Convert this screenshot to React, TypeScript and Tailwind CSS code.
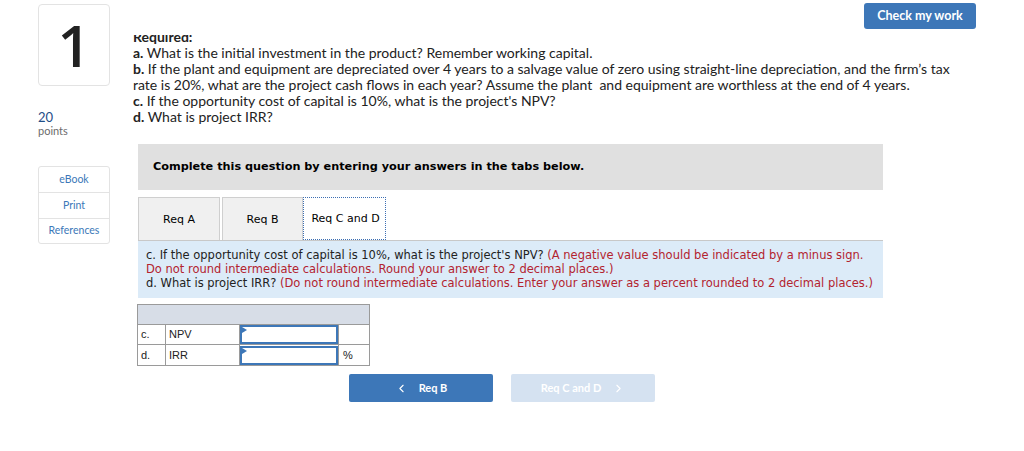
import { ChevronLeft, ChevronRight } from 'lucide-react'

export default function App() {
  const sans = { fontFamily: 'Lato, "Liberation Sans", sans-serif' }
  const verdana = { fontFamily: '"DejaVu Sans", Verdana, sans-serif' }
  return (
    <div className="w-[1024px] h-[451px] bg-white flex pl-[38px] text-[#222]" style={sans}>
      {/* left column */}
      <div className="w-[72px] pt-[4px] flex flex-col">
        <div
          className="h-[82px] border border-[#e3e3e3] rounded-[4px] flex items-center justify-center text-[58px] leading-none font-semibold text-[#222]"
          style={{ fontFamily: '"Open Sans", sans-serif' }}
        >
          1
        </div>
        <div className="mt-[24px] text-[13px] leading-[14px] text-[#1f4e87]">20</div>
        <div className="text-[11px] leading-[14px] text-[#6b6b6b]">points</div>
        <div className="mt-[28px] border border-[#e3e3e3] rounded-[3px] flex flex-col text-[10.5px] text-[#3b78b8]">
          <div className="h-[26px] flex items-center justify-center border-b border-[#e3e3e3]">eBook</div>
          <div className="h-[26px] flex items-center justify-center border-b border-[#e3e3e3]">Print</div>
          <div className="h-[24px] flex items-center justify-center">References</div>
        </div>
      </div>

      {/* main column */}
      <div className="ml-[23px] w-[843px] flex flex-col">
        <div className="flex justify-end pt-[3px]">
          <button className="h-[26px] w-[112px] rounded-[3px] bg-[#3d77b8] text-white text-[12.5px] font-bold">
            Check my work
          </button>
        </div>
        <div className="mt-[6px] h-[96px] overflow-hidden">
          <div className="-mt-[6px] text-[14px] leading-[16px]">
            <p className="font-bold">Required:</p>
            <p><b>a.</b> What is the initial investment in the product? Remember working capital.</p>
            <p className="w-[830px]">
              <b>b.</b> If the plant and equipment are depreciated over 4 years to a salvage value of zero using straight-line depreciation, and the firm’s tax rate is 20%, what are the project cash flows in each year? Assume the plant&nbsp; and equipment are worthless at the end of 4 years.
            </p>
            <p><b>c.</b> If the opportunity cost of capital is 10%, what is the project's NPV?</p>
            <p><b>d.</b> What is project IRR?</p>
          </div>
        </div>

        <div className="ml-[5px] w-[745px] mt-[13px]" style={verdana}>
          <div className="h-[46px] bg-[#e0e0e0] flex items-center pl-[15px] text-[11.25px] font-bold text-black">
            Complete this question by entering your answers in the tabs below.
          </div>
          <div className="mt-[7px] flex text-[11px] text-black">
            <div className="w-[82px] h-[43px] bg-[#f0f0f0] border border-[#cfcfcf] border-b-0 flex items-center justify-center pt-[2px]">Req A</div>
            <div className="ml-[2px] w-[81px] h-[43px] bg-[#f0f0f0] border border-[#cfcfcf] border-b-0 flex items-center justify-center pt-[2px]">Req B</div>
            <div className="w-[83px] h-[43px] bg-white border border-dotted border-[#3d6fb3] flex items-center justify-center pt-[2px] pl-[2px]">Req C and D</div>
          </div>
          <div className="border-t border-[#c8c8c8] bg-[#dcebf8] h-[58px] pl-[8px] pt-[7px] text-[11.5px] leading-[14px]">
            <p>
              c. If the opportunity cost of capital is 10%, what is the project's NPV?{' '}
              <span className="text-[#b3232f]">(A negative value should be indicated by a minus sign. Do not round intermediate calculations. Round your answer to 2 decimal places.)</span>
            </p>
            <p>
              d. What is project IRR?{' '}
              <span className="text-[#b3232f]">(Do not round intermediate calculations. Enter your answer as a percent rounded to 2 decimal places.)</span>
            </p>
          </div>

          <table
            className="mt-[6px] -ml-[1px] border-collapse text-[11px] text-[#222]"
            style={{ fontFamily: '"Liberation Sans", Arial, sans-serif' }}
          >
            <tbody>
              <tr className="h-[20px] bg-[#d7dde7]">
                <td colSpan={4} className="border border-[#9a9a9a]"></td>
              </tr>
              <tr className="h-[20px]">
                <td className="w-[28px] border border-[#9a9a9a] pl-[3px]">c.</td>
                <td className="w-[74px] border border-[#9a9a9a] pl-[3px]">NPV</td>
                <td className="w-[99px] border border-[#9a9a9a] p-0">
                  <div className="relative h-[19px] border-2 border-[#3d77b8]">
                    <span className="absolute left-0 top-0 w-0 h-0 border-t-[3px] border-b-[3px] border-l-[5px] border-t-transparent border-b-transparent border-l-[#3d77b8]"></span>
                  </div>
                </td>
                <td className="w-[31px] border border-[#9a9a9a] pl-[4px]"></td>
              </tr>
              <tr className="h-[21px]">
                <td className="border border-[#9a9a9a] pl-[3px]">d.</td>
                <td className="border border-[#9a9a9a] pl-[3px]">IRR</td>
                <td className="border border-[#9a9a9a] p-0">
                  <div className="relative h-[19px] border-2 border-[#3d77b8]">
                    <span className="absolute left-0 top-0 w-0 h-0 border-t-[3px] border-b-[3px] border-l-[5px] border-t-transparent border-b-transparent border-l-[#3d77b8]"></span>
                  </div>
                </td>
                <td className="border border-[#9a9a9a] pl-[4px]">%</td>
              </tr>
            </tbody>
          </table>

          <div className="mt-[8px] ml-[211px] flex gap-[18px]" style={sans}>
            <button className="w-[144px] h-[28px] rounded-[2px] bg-[#3d77b8] text-white text-[11px] font-bold flex items-center justify-center gap-[11px]">
              <ChevronLeft size={13} strokeWidth={2} />
              <span>Req B</span>
            </button>
            <button className="w-[144px] h-[28px] rounded-[2px] bg-[#d5e2f1] text-white text-[11px] font-bold flex items-center justify-center gap-[11px]">
              <span>Req C and D</span>
              <ChevronRight size={13} strokeWidth={2} />
            </button>
          </div>
        </div>
      </div>
    </div>
  )
}
